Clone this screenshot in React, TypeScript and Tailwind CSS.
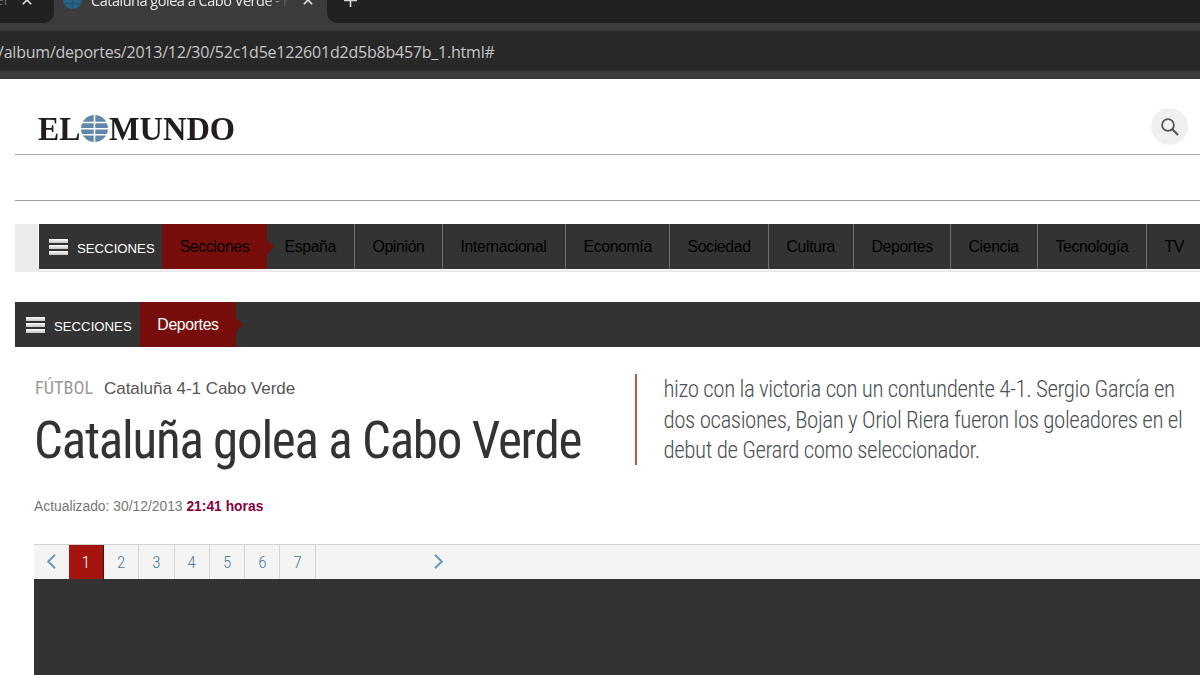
import clsx from 'clsx';
import type { ReactNode } from 'react';

const condensed = "font-['Roboto_Condensed',Roboto,sans-serif] [font-stretch:75%]";

const sections = [
  { name: 'España', width: 'w-[88px]' },
  { name: 'Opinión', width: 'w-[88px]' },
  { name: 'Internacional', width: 'w-[123px]' },
  { name: 'Economía', width: 'w-[104px]' },
  { name: 'Sociedad', width: 'w-[99px]' },
  { name: 'Cultura', width: 'w-[85px]' },
  { name: 'Deportes', width: 'w-[97px]' },
  { name: 'Ciencia', width: 'w-[87px]' },
  { name: 'Tecnología', width: 'w-[109px]' },
  { name: 'TV', width: 'w-[109px]' },
];

const pages = [2, 3, 4, 5, 6, 7];

const Globe = ({ className, fill, line }: { className?: string; fill: string; line: string }) => (
  <svg viewBox="0 0 26 26" className={className}>
    <circle cx="13" cy="13" r="13" fill={fill} />
    <path d="M13 0V26M0 7.3H26M0 13.2H26M0 19H26" stroke={line} strokeWidth="1.5" fill="none" />
  </svg>
);

const Cross = ({ className }: { className?: string }) => (
  <svg viewBox="0 0 10 10" className={className} stroke="#e4e4e4" strokeWidth="1.6">
    <path d="M0.8 0.8L9.2 9.2M9.2 0.8L0.8 9.2" />
  </svg>
);

const BrowserBar = () => (
  <div className="h-[79px] overflow-hidden bg-[#3c3c3c] font-['Open_Sans','Noto_Sans',sans-serif]">
    <div className="flex h-[31px] items-start">
      <div className="flex h-[23px] w-[54px] shrink-0 rounded-br-[10px] bg-[#202121] text-[15px] leading-none">
        <span className="-mt-2 ml-[-5px] w-[27px] text-[#6f6f6f]">er</span>
        <Cross className="-mt-[5px] h-[10px] w-[10px]" />
      </div>
      <div className="flex w-[273px] shrink-0">
        <Globe className="-mt-[10px] ml-[9px] h-[19px] w-[19px]" fill="#286689" line="#1f506e" />
        <div className="ml-[9px] w-[198px] overflow-hidden [mask-image:linear-gradient(to_right,black_88%,transparent)]">
          <p className="-mt-[9px] w-max whitespace-nowrap text-[14.5px] leading-[20px] tracking-[-0.48px] text-[#e8e8e8]">
            Cataluña golea a Cabo Verde - F
          </p>
        </div>
        <Cross className="-mt-[5px] ml-[14px] h-[10px] w-[10px]" />
      </div>
      <div className="h-[23px] grow rounded-bl-[10px] bg-[#202121] pl-[17px]">
        <svg viewBox="0 0 13 13" className="-mt-[6px] h-[13px] w-[13px]" stroke="#d6d6d6" strokeWidth="1.6">
          <path d="M6.5 0V13M0 6.5H13" />
        </svg>
      </div>
    </div>
    <div className="h-[40px] bg-[#282828] text-[16px] leading-[42px] tracking-[-0.22px] text-[#c6c6c6]">
      <p className="-ml-[2px] w-max whitespace-nowrap">/album/deportes/2013/12/30/52c1d5e122601d2d5b8b457b_1.html#</p>
    </div>
  </div>
);

const Header = () => (
  <header className="ml-[15px] flex h-[76px] items-start border-b border-[#a9a9a9] pl-[23px]">
    <h1 className="mt-[29px] flex h-[39px] items-center font-['Liberation_Serif',serif] text-[34.5px] leading-[38px] font-bold text-[#231c1c]">
      <span className="w-[43px] origin-left scale-x-[0.92] whitespace-nowrap">EL</span>
      <Globe className="mt-px h-[27px] w-[27px] shrink-0" fill="#5f87ab" line="#fff" />
      <span className="ml-px w-[125px] origin-left scale-x-[0.94] whitespace-nowrap">MUNDO</span>
    </h1>
    <button className="mt-[29px] mr-[12px] ml-auto flex h-[37px] w-[37px] items-center justify-center rounded-full bg-[#f0f0f0]">
      <svg viewBox="0 0 18 18" className="h-[18px] w-[18px]" fill="none" stroke="#555" strokeWidth="1.8">
        <circle cx="7" cy="7" r="5.9" />
        <path d="M11.3 11.3L17 17" strokeWidth="2.2" />
      </svg>
    </button>
  </header>
);

const MenuButton = ({ className }: { className?: string }) => (
  <div className={clsx('flex shrink-0 items-center text-[13.2px] tracking-normal text-white', className)}>
    <div className="mr-[9px] flex h-[16px] w-[19px] shrink-0 flex-col justify-between">
      <i className="h-[4px] bg-linear-to-b from-white to-[#c4c4c4]" />
      <i className="h-[4px] bg-linear-to-b from-white to-[#c4c4c4]" />
      <i className="h-[4px] bg-linear-to-b from-white to-[#c4c4c4]" />
    </div>
    <span className="pt-[4px]">SECCIONES</span>
  </div>
);

const ActiveTab = ({ className, children }: { className?: string; children: ReactNode }) => (
  <div className={clsx('relative flex shrink-0 items-center justify-center bg-[#780e0b] pt-px', className)}>
    {children}
    <svg viewBox="0 0 7 14" className="absolute top-1/2 left-full h-[14px] w-[7px] -translate-y-1/2" fill="#780e0b">
      <path d="M0 0L7 7L0 14Z" />
    </svg>
  </div>
);

const TopNav = () => (
  <nav className="ml-[15px] h-[48px] overflow-hidden bg-[#ecebea] pl-[23px]">
    <div className="flex h-[46px] border-b border-l border-white bg-[#333] text-[15.8px] tracking-[-0.35px] text-black">
      <MenuButton className="w-[123px] pl-[10px]" />
      <ActiveTab className="w-[105px]">Secciones</ActiveTab>
      {sections.map((section) => (
        <a key={section.name} className={clsx('flex shrink-0 items-center border-r border-[#707070] pt-px pl-[17.5px]', section.width)}>
          {section.name}
        </a>
      ))}
    </div>
  </nav>
);

const Pager = () => (
  <div className={clsx('flex h-[35px] border-t border-[#d2d2d2] bg-[#f4f4f4] text-[17px] font-light text-[#4a7f9e]', condensed)}>
    <div className="flex w-[35px] items-center justify-center">
      <svg viewBox="0 0 9 15" className="-mt-px h-[15px] w-[9px]" fill="none" stroke="#669bb8" strokeWidth="2">
        <path d="M8 0.8L1.2 7.5L8 14.2" />
      </svg>
    </div>
    <div className="flex w-[35px] items-center justify-center border-r border-[#4b1010] bg-[#a51510] pt-px text-white">1</div>
    {pages.map((page) => (
      <div key={page} className="flex w-[35.3px] items-center justify-center border-r border-[#d6d6d6] pt-px">
        {page}
      </div>
    ))}
    <div className="flex w-[246px] items-center justify-center">
      <svg viewBox="0 0 9 15" className="-mt-px h-[15px] w-[9px]" fill="none" stroke="#669bb8" strokeWidth="2">
        <path d="M1 0.8L7.8 7.5L1 14.2" />
      </svg>
    </div>
  </div>
);

const Article = () => (
  <main className="ml-[34px]">
    <div className="flex h-[170px]">
      <div className="w-[601px] shrink-0">
        <p className="flex h-[28px] items-center whitespace-nowrap text-[17px] text-[#555]">
          <span className={clsx('-mt-px w-[70px] pl-px text-[18.3px] text-[#9a9a9a]', condensed)}>FÚTBOL</span>
          <span className="pt-px tracking-[-0.03px]">Cataluña 4-1 Cabo Verde</span>
        </p>
        <h2 className={clsx('mt-[9px] w-max whitespace-nowrap text-[51px] leading-[60px] tracking-[-1.22px] text-[#333]', condensed)}>
          Cataluña golea a Cabo Verde
        </h2>
        <p className="mt-[25px] text-[13.85px] leading-[20px] text-[#777]">
          Actualizado: 30/12/2013 <b className="text-[#85003f]">21:41 horas</b>
        </p>
      </div>
      <div className={clsx('h-[91px] border-l-2 border-[#b5565a] pt-px pl-[26.5px] text-[23px] leading-[30.7px] font-light tracking-[-0.45px] text-[#4c5155]', condensed)}>
        <p className="w-max whitespace-nowrap">hizo con la victoria con un contundente 4-1. Sergio García en</p>
        <p className="w-max whitespace-nowrap">dos ocasiones, Bojan y Oriol Riera fueron los goleadores en el</p>
        <p className="w-max whitespace-nowrap">debut de Gerard como seleccionador.</p>
      </div>
    </div>
    <Pager />
    <div className="h-[96px] bg-[#333]" />
  </main>
);

const App = () => {
  return (
    <div className="h-[675px] w-[1200px] overflow-hidden bg-white font-['Liberation_Sans',sans-serif]">
      <BrowserBar />
      <Header />
      <div className="mb-[23px] ml-[15px] h-[46px] border-b border-[#a0a0a0]" />
      <TopNav />
      <nav className="mt-[30px] mb-[27px] ml-[15px] flex h-[45px] bg-[#333] text-[15.8px] tracking-[-0.35px]">
        <MenuButton className="w-[125px] pl-[11px]" />
        <ActiveTab className="w-[96px] text-white">Deportes</ActiveTab>
      </nav>
      <Article />
    </div>
  );
};
export default App;
